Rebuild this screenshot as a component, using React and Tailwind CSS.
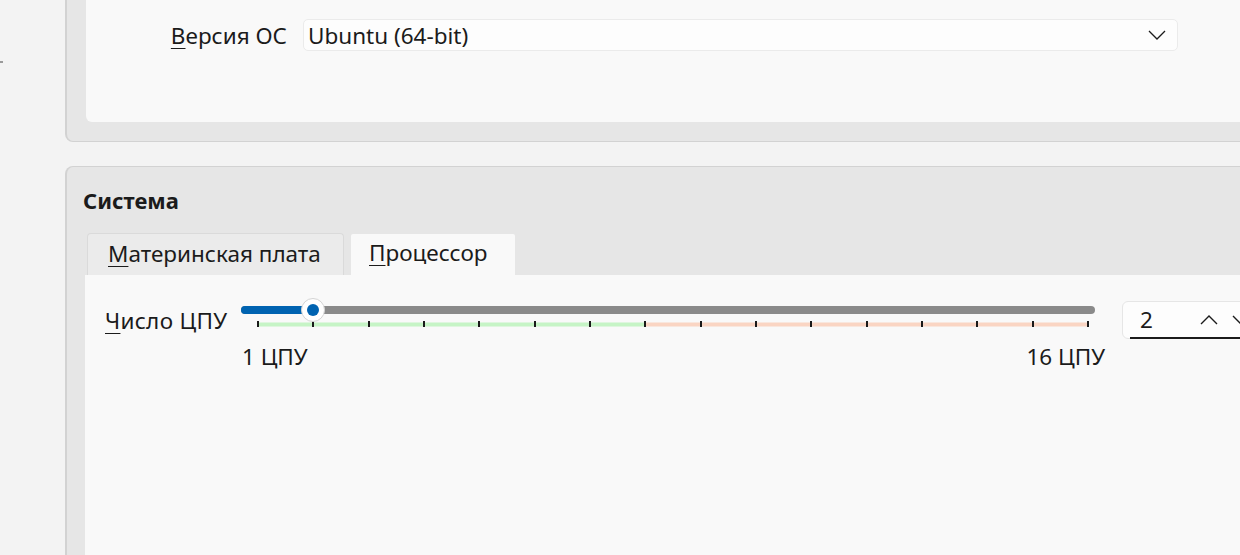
import React from "react";

function Ticks() {
  const xs = Array.from({ length: 16 }, (_, i) => 1 + i * 55.33);
  return (
    <svg width="834" height="8" viewBox="0 0 834 8" className="block ml-[15px]">
      <rect x="1" y="1.5" width="389" height="4" fill="#c6f4c6" />
      <rect x="390" y="1.5" width="442" height="4" fill="#fad5c3" />
      {xs.map((x, i) => (
        <rect key={i} x={Math.round(x)} y="0" width="2" height="6" fill="#1b1b1b" />
      ))}
    </svg>
  );
}

export default function App() {
  return (
    <div className="w-[1240px] h-[555px] overflow-hidden bg-[#f3f3f3] flex font-['Noto_Sans',sans-serif] text-[#1b1b1b]">
      <div className="w-[65px] shrink-0">
        <div className="mt-[61px] w-[3px] h-[2px] bg-[#9a9a9a]" />
      </div>
      <div className="w-[1200px] shrink-0 flex flex-col">
        {/* Group box 1 */}
        <div className="h-[142px] shrink-0 border-l-2 border-b border-[#d2d2d2] rounded-bl-[8px] bg-[#e6e6e6] pl-[19px] pb-[19px] flex">
          <div className="flex-1 bg-[#f9f9f9] rounded-bl-[6px] pt-[19px]">
            <div className="flex items-center h-[32px]">
              <div className="w-[217px] pr-[16px] text-right text-[22.5px] leading-[30px] pt-[2px]">
                <span className="underline underline-offset-[4px] decoration-1">В</span>ерсия ОС
              </div>
              <div className="w-[875px] h-[32px] bg-[#fdfdfd] border border-[#ebebeb] rounded-[5px] flex items-center pl-[4px] pr-[10px] text-[22.5px] leading-[30px]">
                <span className="flex-1 pt-[2px]">Ubuntu (64-bit)</span>
                <svg width="18" height="10" viewBox="0 0 18 10" className="mr-[1px]">
                  <path d="M1 1 L9 9 L17 1" fill="none" stroke="#1b1b1b" strokeWidth="1.3" />
                </svg>
              </div>
            </div>
          </div>
        </div>

        {/* Group box 2 */}
        <div className="mt-[24px] flex-1 border-l-2 border-t border-[#d2d2d2] rounded-tl-[8px] bg-[#e6e6e6] pl-[18px] flex flex-col">
          <div className="pt-[18px] -ml-[2px] text-[22px] leading-[30px] font-bold">Система</div>
          <div className="mt-[18px] flex items-end ml-[2px] gap-[7px] h-[42px]">
            <div className="h-[42px] w-[257px] bg-[#ebebeb] border border-[#dadada] border-b-0 rounded-t-[4px] pl-[20px] pt-[5px] text-[22.5px] leading-[30px]">
              <span className="underline underline-offset-[4px] decoration-1">М</span>атеринская плата
            </div>
            <div className="h-[41px] w-[164px] bg-[#f9f9f9] rounded-t-[2px] pl-[18px] pt-[4px] text-[22.5px] leading-[30px]">
              <span className="underline underline-offset-[4px] decoration-1">П</span>роцессор
            </div>
          </div>
          <div className="flex-1 bg-[#f9f9f9] pl-[20px] pt-[24px] flex items-start">
            <div className="w-[136px] shrink-0 mt-[7px] text-[22.5px] leading-[30px] tracking-[0.3px]">
              <span className="underline underline-offset-[4px] decoration-1">Ч</span>исло ЦПУ
            </div>
            <div className="w-[854px] shrink-0 flex flex-col">
              <div className="relative h-[22px] flex items-center">
                <div className="w-full h-[8px] rounded-[4px] bg-[#8a8a8a] flex">
                  <div className="w-[72px] h-[8px] rounded-l-[4px] bg-[#0063b1]" />
                </div>
                <div className="absolute left-[60px] top-[-1px] w-[24px] h-[24px] rounded-full bg-white border border-[#d4d4d4] flex items-center justify-center">
                  <div className="w-[12px] h-[12px] rounded-full bg-[#0063b1]" />
                </div>
              </div>
              <Ticks />
              <div className="mt-[13px] w-[863px] ml-[1px] flex justify-between text-[22.5px] leading-[30px]">
                <span>1 ЦПУ</span>
                <span>16 ЦПУ</span>
              </div>
            </div>
            <div className="ml-[27px] mt-[2px] w-[140px] h-[38px] shrink-0 bg-[#fdfdfd] border border-[#e6e6e6] rounded-[6px] relative flex items-center pl-[17px] text-[22.5px] leading-[30px]">
              <span className="w-[60px] shrink-0">2</span>
              <svg width="18" height="10" viewBox="0 0 18 10" className="shrink-0">
                <path d="M1 9 L9 1 L17 9" fill="none" stroke="#1b1b1b" strokeWidth="1.4" />
              </svg>
              <svg width="18" height="10" viewBox="0 0 18 10" className="ml-[14px] shrink-0">
                <path d="M1 1 L9 9 L17 1" fill="none" stroke="#1b1b1b" strokeWidth="1.4" />
              </svg>
              <div className="absolute left-[7px] right-0 bottom-[-1px] h-[2px] bg-[#1b1b1b]" />
            </div>
          </div>
        </div>
      </div>
    </div>
  );
}
